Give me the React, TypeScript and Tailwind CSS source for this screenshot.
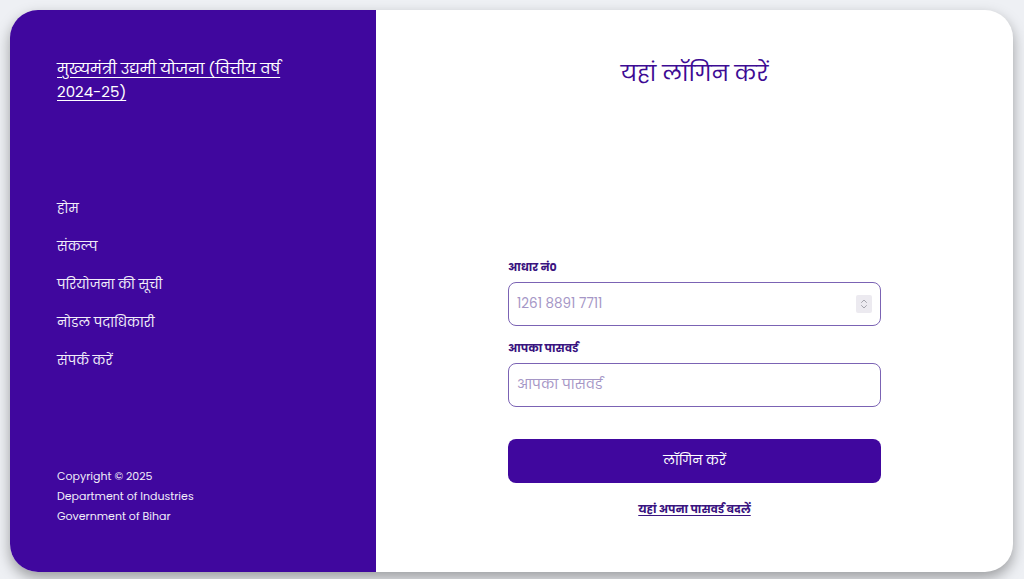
import { ChevronsUpDown } from 'lucide-react'

const navItems = ['होम', 'संकल्प', 'परियोजना की सूची', 'नोडल पदाधिकारी', 'संपर्क करें']

const font = "font-['Poppins','Noto_Sans','Noto_Sans_Devanagari',sans-serif]"

export default function App() {
  return (
    <div className={`h-[579px] w-full overflow-hidden bg-[#eef0f4] p-[10px] pr-[11px] ${font}`}>
      <div className="flex h-[562px] w-full overflow-hidden rounded-[28px] bg-white shadow-[0_6px_14px_rgba(0,0,0,0.35)]">
        {/* Sidebar */}
        <aside className="flex w-[366px] shrink-0 flex-col bg-[#40079e] px-[47px] pt-[47px] pb-[46px] text-white">
          <a href="#" className="pr-[40px] text-[15px] leading-[23px] text-white underline underline-offset-[3px]">
            मुख्यमंत्री उद्यमी योजना (वित्तीय वर्ष 2024-25)
          </a>

          <nav className="mt-[95px] flex flex-col gap-[16px]">
            {navItems.map((item) => (
              <a key={item} href="#" className="text-[13px] leading-[22px] text-[#f1edf9]">
                {item}
              </a>
            ))}
          </nav>

          <div className="mt-auto flex flex-col text-[11px] leading-[20px] text-[#f1edf9]">
            <span>Copyright © 2025</span>
            <span>Department of Industries</span>
            <span>Government of Bihar</span>
          </div>
        </aside>

        {/* Login panel */}
        <main className="flex flex-1 flex-col items-center pt-[48px]">
          <h1 className="text-[22px] leading-[32px] text-[#3d0b94]">यहां लॉगिन करें</h1>

          <form className="mt-[168px] flex w-[373px] flex-col" onSubmit={(e) => e.preventDefault()}>
            <label className="mb-[6px] text-[11px] font-bold leading-[18px] text-[#3a1480]">आधार नं0</label>
            <div className="relative">
              <input
                type="text"
                placeholder="1261 8891 7711"
                className="h-[44px] w-full rounded-[8px] border border-[#7b63b4] px-[8px] text-[13.5px] text-[#3a1480] outline-none placeholder:text-[#a596c6]"
              />
              <span className="absolute right-[9px] top-[13px] flex h-[18px] w-[16px] items-center justify-center rounded-[2px] bg-[#eceaf0] text-[#8c8c96]">
                <ChevronsUpDown size={12} strokeWidth={1.5} />
              </span>
            </div>

            <label className="mt-[13px] mb-[6px] text-[11px] font-bold leading-[18px] text-[#3a1480]">आपका पासवर्ड</label>
            <input
              type="password"
              placeholder="आपका पासवर्ड"
              className="h-[44px] w-full rounded-[8px] border border-[#7b63b4] px-[8px] text-[13.5px] text-[#3a1480] outline-none placeholder:text-[#a596c6]"
            />

            <button
              type="submit"
              className="mt-[32px] h-[44px] w-full rounded-[8px] bg-[#40079e] text-[13px] text-white"
            >
              लॉगिन करें
            </button>

            <a href="#" className="mt-[17px] self-center text-[11px] font-bold leading-[18px] text-[#3a1480] underline underline-offset-2">
              यहां अपना पासवर्ड बदलें
            </a>
          </form>
        </main>
      </div>
    </div>
  )
}
